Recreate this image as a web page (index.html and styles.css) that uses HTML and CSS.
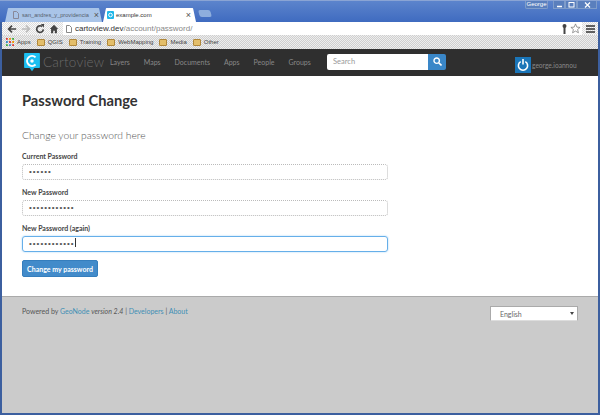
FILE: index.html
```html
<!DOCTYPE html>
<html>
	<head>
		<title>Password Change</title>
		<link rel="stylesheet" href="styles.css">
	</head>
	<body>
		<div class="window">
			<!-- title bar with tabs -->
			<div class="titlebar">
				<div class="tab tab-off">
					<svg class="page-icon" width="6" height="8" viewBox="0 0 6 8"><path d="M.5.5h3l2 2v5h-5z" fill="none" stroke="#889"/></svg>
					<span class="tab-title">san_andres_y_providencia</span>
					<span class="tab-x">×</span>
				</div>
				<div class="tab tab-on">
					<svg class="fav" width="7" height="8" viewBox="0 0 7 8"><rect width="7" height="8" rx="1" fill="#1fb6e8"/><circle cx="3.500" cy="4" r="1.800" fill="none" stroke="#fff"/></svg>
					<span class="tab-title">example.com</span>
					<span class="tab-x">×</span>
				</div>
				<div class="tab-new"></div>
				<div class="title-right">
					<span class="user-chip">George</span>
					<div class="win-btns">
						<span class="win-btn"><svg width="7" height="6" viewBox="0 0 7 6"><path d="M1 4.500h5" stroke="#fff" stroke-width="1.500"/></svg></span>
						<span class="win-btn"><svg width="7" height="6" viewBox="0 0 7 6"><rect x="1" y=".5" width="5" height="4.500" fill="none" stroke="#fff"/></svg></span>
						<span class="win-btn win-close"><svg width="7" height="6" viewBox="0 0 7 6"><path d="M1 .5l5 5m0-5l-5 5" stroke="#fff" stroke-width="1.200"/></svg></span>
					</div>
				</div>
			</div>

			<!-- address bar -->
			<div class="toolbar">
				<svg class="tool" width="10" height="10" viewBox="0 0 12 12"><path d="M11 6H3m3-4L2 6l4 4" fill="none" stroke="#444" stroke-width="2"/></svg>
				<svg class="tool" width="10" height="10" viewBox="0 0 12 12"><path d="M1 6h8M6 2l4 4-4 4" fill="none" stroke="#bbb" stroke-width="2"/></svg>
				<svg class="tool" width="10" height="10" viewBox="0 0 12 12"><path d="M10 6.500A4 4 0 1 1 8.500 3" fill="none" stroke="#444" stroke-width="2"/><path d="M7 0l4 0-.5 4.500z" fill="#444"/></svg>
				<svg class="tool" width="10" height="10" viewBox="0 0 12 12"><path d="M6 1L1 6h1.500v5h2.500V8h2v3h2.500V6H11z" fill="#444"/></svg>
				<div class="omnibox">
					<svg class="page-icon" width="6" height="8" viewBox="0 0 6 8"><path d="M.5.5h3l2 2v5h-5z" fill="none" stroke="#888"/></svg>
					<span class="url-host">cartoview.dev</span><span class="url-path">/account/password/</span>
					<svg class="omni-end" width="5" height="10" viewBox="0 0 5 10"><circle cx="2.500" cy="2" r="2" fill="#444"/><path d="M1.500 3h2v7h-2z" fill="#444"/></svg>
					<svg class="omni-star" width="11" height="11" viewBox="0 0 12 12"><path d="M6 1l1.500 3.500 3.500.3-2.700 2.300.9 3.600L6 8.800l-3.200 1.900.9-3.600L1 4.800l3.500-.3z" fill="#fff" stroke="#777" stroke-width=".8"/></svg>
				</div>
				<svg class="menu-icon" width="9" height="8" viewBox="0 0 9 8"><path d="M0 1h9M0 4h9M0 7h9" stroke="#333" stroke-width="1.300"/></svg>
			</div>

			<!-- bookmarks -->
			<div class="bookmarks">
				<span class="bm"><svg width="8" height="8" viewBox="0 0 9 9"><path d="M0 0h2v2H0z" fill="#d33"/><path d="M3.500 0h2v2h-2z" fill="#e90"/><path d="M7 0h2v2H7z" fill="#3a3"/><path d="M0 3.500h2v2H0z" fill="#38c"/><path d="M3.500 3.500h2v2h-2z" fill="#d33"/><path d="M7 3.500h2v2H7z" fill="#e90"/><path d="M0 7h2v2H0z" fill="#3a3"/><path d="M3.500 7h2v2h-2z" fill="#38c"/><path d="M7 7h2v2H7z" fill="#d33"/></svg>Apps</span>
				<span class="bm"><i class="folder"></i>QGIS</span>
				<span class="bm"><i class="folder"></i>Training</span>
				<span class="bm"><i class="folder"></i>WebMapping</span>
				<span class="bm"><i class="folder"></i>Media</span>
				<span class="bm"><i class="folder"></i>Other</span>
			</div>

			<!-- site navbar -->
			<div class="navbar">
				<svg class="logo" width="16" height="19" viewBox="0 0 20 24"><path d="M1 0h18a1 1 0 0 1 1 1v17a1 1 0 0 1-1 1h-6l-3 4-3-4H1a1 1 0 0 1-1-1V1a1 1 0 0 1 1-1z" fill="#1cc0f2"/><path d="M14.500 5.500a6.300 6.300 0 1 0 0 9" fill="none" stroke="#fff" stroke-width="2.500"/><circle cx="10" cy="10" r="2.200" fill="#fff"/></svg>
				<span class="brand">Cartoview</span>
				<ul class="nav-links">
					<li>Layers</li>
					<li>Maps</li>
					<li>Documents</li>
					<li>Apps</li>
					<li>People</li>
					<li>Groups</li>
				</ul>
				<div class="search">
					<span class="search-input">Search</span>
					<span class="search-btn"><svg width="9" height="9" viewBox="0 0 9 9"><circle cx="3.700" cy="3.700" r="2.700" fill="none" stroke="#fff" stroke-width="1.400"/><path d="M5.700 5.700L8.500 8.500" stroke="#fff" stroke-width="1.600"/></svg></span>
				</div>
				<div class="account">
					<span class="avatar"><svg width="12" height="12" viewBox="0 0 13 13"><path d="M4 2.800a5 5 0 1 0 5 0" fill="none" stroke="#fff" stroke-width="1.700"/><path d="M6.500 0v6" stroke="#fff" stroke-width="1.700"/></svg></span>
					<span class="username">george.ioannou</span>
				</div>
			</div>

			<!-- page content -->
			<div class="content">
				<h1>Password Change</h1>
				<h3>Change your password here</h3>
				<label>Current Password</label>
				<div class="field">••••••</div>
				<label>New Password</label>
				<div class="field">••••••••••••</div>
				<label>New Password (again)</label>
				<div class="field field-focus">••••••••••••<i class="caret"></i></div>
				<button type="button" class="btn">Change my password</button>
			</div>

			<div class="footer">
				<p>Powered by <a>GeoNode</a> <em>version 2.4</em> | <a>Developers</a> | <a>About</a></p>
				<div class="lang">English<i class="arrow"></i></div>
			</div>
		</div>
	</body>
</html>
```

FILE: styles.css
```css
html, body {
	margin: 0;
	height: 100%;
}
body {
	font-family: "Lato", "Liberation Sans", sans-serif;
	background-color: #3c5f9f;
	overflow: hidden;
}
.window {
	box-sizing: border-box;
	width: 600px;
	height: 415px;
	padding: 0 2px 2px 2px;
	display: flex;
	flex-direction: column;
}
.titlebar {
	height: 22px;
	margin: 0 -2px;
	padding: 0 0 0 5px;
	display: flex;
	align-items: flex-end;
	background: linear-gradient(#5c84cc, #3f6bc0);
	border-top: 1px solid #8aa4d4;
	box-sizing: border-box;
}
.tab {
	height: 14px;
	display: flex;
	align-items: center;
	box-sizing: border-box;
	border-radius: 4px 4px 0 0;
	font-family: "Liberation Sans", sans-serif;
	font-size: 6px;
}
.tab-off {
	width: 97px;
	padding: 0 3px 0 8px;
	font-size: 5.600px;
	background-color: #a9c4e8;
	color: #55606e;
	clip-path: polygon(3px 0, calc(100% - 3px) 0, 100% 100%, 0 100%);
}
.tab-on {
	width: 93px;
	margin-left: 1px;
	padding: 0 5px 0 4px;
	background-color: #fff;
	color: #333;
	clip-path: polygon(3px 0, calc(100% - 3px) 0, 100% 100%, 0 100%);
}
.tab-off .tab-title {
	margin-left: 3px;
}
.tab-title {
	flex: 1;
	margin-left: 2px;
	white-space: nowrap;
}
.tab-x {
	margin-left: 2px;
	font-size: 9px;
	line-height: 9px;
	color: #555;
}
.tab-new {
	width: 12px;
	height: 7px;
	margin: 0 0 5px 3px;
	background-color: #8eaedd;
	border-radius: 2px;
	transform: skewX(15deg);
}
.title-right {
	margin-left: auto;
	align-self: flex-start;
	display: flex;
	gap: 5px;
	padding-right: 3px;
}
.user-chip {
	box-sizing: border-box;
	height: 8px;
	line-height: 7px;
	width: 23px;
	font-family: "Liberation Sans", sans-serif;
	font-size: 6px;
	text-align: center;
	color: #fff;
	background-color: #5a7fbd;
	border: 1px solid #7f9cc9;
	border-top: none;
	border-radius: 0 0 2px 2px;
}
.win-btns {
	display: flex;
}
.win-btn {
	box-sizing: border-box;
	width: 12px;
	height: 8px;
	display: flex;
	align-items: center;
	justify-content: center;
	background-color: #5a7fbd;
	border: 1px solid #7f9cc9;
	border-top: none;
}
.win-close {
	width: 20px;
}
.toolbar {
	height: 13px;
	display: flex;
	align-items: center;
	padding: 0 3px;
	background-color: #e8e8e8;
	background-image: conic-gradient(#fafafa 25%, #dcdcdc 0 50%, #fafafa 0 75%, #dcdcdc 0);
	background-size: 2px 2px;
}
.tool {
	flex: none;
	margin: 0 2px;
}
.omnibox {
	flex: 1;
	display: flex;
	align-items: center;
	margin-left: 2px;
	font-family: "Liberation Sans", sans-serif;
	font-size: 8px;
	height: 13px;
	background-color: #fff;
}
.omnibox .page-icon {
	margin: 0 3px 0 3px;
}
.url-host {
	color: #333;
}
.url-path {
	color: #888;
}
.omni-end {
	margin-left: auto;
	margin-right: 3px;
}
.omni-star {
	margin-right: 1px;
}
.menu-icon {
	margin-left: 4px;
}
.bookmarks {
	height: 14px;
	display: flex;
	align-items: center;
	gap: 6px;
	padding-left: 4px;
	font-family: "Liberation Sans", sans-serif;
	font-size: 6px;
	color: #444;
	background-color: #dcdcdc;
	background-image: conic-gradient(#ededed 25%, #cfcfcf 0 50%, #ededed 0 75%, #cfcfcf 0);
	background-size: 2px 2px;
}
.bm {
	display: flex;
	align-items: center;
	gap: 3px;
}
.folder {
	box-sizing: border-box;
	width: 8px;
	height: 7px;
	background-color: #e3be6a;
	border: 1px solid #b0873a;
	border-radius: 1px;
}
.navbar {
	box-sizing: border-box;
	height: 27px;
	display: flex;
	align-items: center;
	background-color: #2f2f2f;
	padding: 0 0 2px 22px;
	color: #888;
	font-size: 7px;
}
.logo {
	flex: none;
	margin-top: 2px;
}
.brand {
	width: 64px;
	margin-left: 3px;
	font-size: 13.500px;
	font-weight: 300;
	letter-spacing: .2px;
	color: #6a6a6a;
}
.nav-links {
	list-style: none;
	display: flex;
	gap: 14px;
	margin: 0 0 0 3px;
	padding: 0;
	width: 217px;
}
.search {
	display: flex;
	height: 16px;
}
.search-input {
	width: 101px;
	box-sizing: border-box;
	padding-left: 6px;
	font-size: 7.500px;
	line-height: 16px;
	color: #999;
	background-color: #fff;
	border-radius: 2px 0 0 2px;
}
.search-btn {
	width: 18px;
	display: flex;
	align-items: center;
	justify-content: center;
	background-color: #3a87c8;
	border-radius: 0 2px 2px 0;
}
.account {
	display: flex;
	align-items: center;
	gap: 1px;
	margin: 6px 0 0 69px;
}
.username {
	font-size: 6.600px;
}
.avatar {
	width: 16px;
	height: 16px;
	display: flex;
	align-items: center;
	justify-content: center;
	background-color: #1a75b8;
}
.content {
	height: 220px;
	box-sizing: border-box;
	padding: 16px 0 0 20px;
	background-color: #fff;
}
h1 {
	margin: 0;
	font-size: 14.700px;
	line-height: 17px;
	font-weight: 700;
	color: #333;
}
h3 {
	margin: 19px 0 0 0;
	font-size: 10.300px;
	line-height: 14px;
	font-weight: 300;
	color: #555;
}
label {
	display: block;
	margin-top: 8px;
	font-size: 7px;
	line-height: 9px;
	font-weight: 700;
	color: #444;
}
h3 + label {
	margin-top: 10px;
}
.field {
	box-sizing: border-box;
	width: 366px;
	height: 16px;
	margin-top: 3px;
	padding-left: 6px;
	font-family: "Liberation Sans", sans-serif;
	font-size: 8px;
	letter-spacing: 1px;
	line-height: 14px;
	color: #555;
	border: 1px dotted #bbb;
	border-radius: 3px;
}
.field-focus {
	border: 1px solid #66afe9;
	box-shadow: 0 0 2px #9fd0f5;
}
.caret {
	display: inline-block;
	width: 1px;
	height: 9px;
	vertical-align: -1px;
	background-color: #333;
}
.btn {
	display: block;
	width: 76px;
	height: 17px;
	margin-top: 8px;
	padding: 0;
	font-family: "Lato", "Liberation Sans", sans-serif;
	font-size: 7px;
	font-weight: 700;
	color: #fff;
	background-color: #428bca;
	border: 1px solid #357ebd;
	border-radius: 2px;
}
.footer {
	flex: 1;
	display: flex;
	justify-content: space-between;
	align-items: flex-start;
	box-sizing: border-box;
	padding: 9px 20px 0 20px;
	background-color: #cbcbcb;
	border-top: 1px solid #aaa;
	font-size: 7px;
	color: #555;
}
.footer p {
	margin: 1px 0 0 0;
	line-height: 9px;
}
.footer a {
	color: #3f8fb5;
}
.lang {
	position: relative;
	box-sizing: border-box;
	width: 88px;
	height: 15px;
	line-height: 14px;
	padding-left: 9px;
	background-color: #fff;
	color: #666;
	border: 1px solid #aaa;
	border-bottom-color: #ddd;
}
.arrow {
	position: absolute;
	right: 3px;
	top: 5px;
	width: 0;
	height: 0;
	border-left: 2px solid transparent;
	border-right: 2px solid transparent;
	border-top: 3px solid #444;
}
```
